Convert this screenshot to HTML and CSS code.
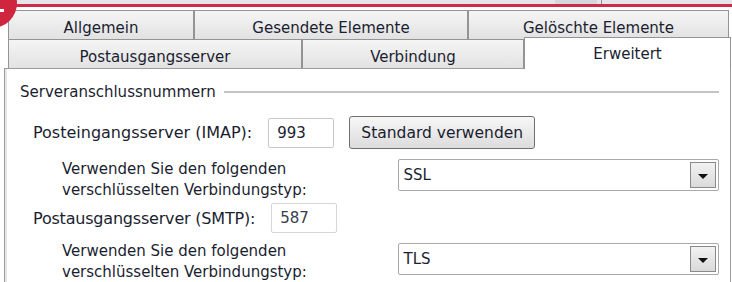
FILE: index.html
```html
<!DOCTYPE html>
<html>
<head>
  <meta charset="UTF-8">
  <title>Kontoeinstellungen - Erweitert</title>
  <link rel="stylesheet" href="styles.css">
</head>
<body>
  <!-- Rest of the window above, cut off by the screenshot -->
  <div class="topbar">
    <div class="topbar-field"></div>
    <div class="topbar-edge"></div>
  </div>
  <div class="redline"></div>
  <div class="badge"></div>

  <div class="tabs">
    <div class="tab-row">
      <div class="tab tab-general">Allgemein</div>
      <div class="tab tab-sent">Gesendete Elemente</div>
      <div class="tab tab-deleted">Gelöschte Elemente</div>
    </div>
    <div class="tab-row">
      <div class="tab tab-outgoing">Postausgangsserver</div>
      <div class="tab tab-connection">Verbindung</div>
      <div class="tab tab-advanced active">Erweitert</div>
    </div>
  </div>

  <div class="panel">
    <div class="group-head">
      <span class="group-title">Serveranschlussnummern</span>
      <span class="group-line"></span>
    </div>

    <div class="port-row first">
      <label class="port-label" for="imap-port">Posteingangsserver (IMAP):</label>
      <input class="port-input" id="imap-port" type="text" value="993">
      <button class="std-button">Standard verwenden</button>
    </div>

    <div class="type-row">
      <div class="type-label">Verwenden Sie den folgenden<br>verschlüsselten Verbindungstyp:</div>
      <div class="combo">
        <span class="combo-value">SSL</span>
        <span class="combo-btn"><span class="arrow"></span></span>
      </div>
    </div>

    <div class="port-row second">
      <label class="port-label" for="smtp-port">Postausgangsserver (SMTP):</label>
      <input class="port-input disabled" id="smtp-port" type="text" value="587" disabled>
    </div>

    <div class="type-row last">
      <div class="type-label">Verwenden Sie den folgenden<br>verschlüsselten Verbindungstyp:</div>
      <div class="combo">
        <span class="combo-value">TLS</span>
        <span class="combo-btn"><span class="arrow"></span></span>
      </div>
    </div>
  </div>
</body>
</html>
```

FILE: styles.css
```css
body {
  margin: 0;
  width: 732px;
  height: 282px;
  overflow: hidden;
  position: relative;
  background: #fff;
  font-family: "DejaVu Sans", Verdana, sans-serif;
  font-size: 15px;
  color: #1a1e30;
}

/* strip of the window above */
.topbar {
  display: flex;
  height: 4px;
  background: #e5e6eb;
}
.topbar-field {
  margin-left: 555px;
  width: 42px;
  background: #d3d7df;
}
.topbar-edge {
  margin-left: 4px;
  width: 1px;
  background: #8e8e8e;
}
.redline {
  height: 3px;
  background: #cf2b46;
}

/* red number marker in the corner */
.badge {
  position: absolute;
  left: -33px;
  top: -22px;
  width: 50px;
  height: 50px;
  border-radius: 50%;
  background: #d0253f;
}
.badge::after {
  content: "";
  position: absolute;
  left: 33px;
  top: 31px;
  width: 4px;
  height: 3px;
  background: #fff;
}

/* Tabs */
.tabs {
  margin-top: 3px;
  padding-left: 8px;
}
.tab-row {
  display: flex;
  align-items: flex-end;
  height: 29px;
}
.tab {
  box-sizing: border-box;
  height: 29px;
  border: 1px solid #949494;
  border-bottom: none;
  background: linear-gradient(#f5f5f5, #e2e2e2);
  display: flex;
  align-items: flex-start;
  justify-content: center;
  padding-top: 8px;
}
.tab-general { width: 186px; }
.tab-sent { width: 274px; }
.tab-deleted { width: 261px; }
.tab-outgoing { width: 294px; }
.tab-connection { width: 222px; }
.tab-advanced { width: 207px; }
.tab.active {
  height: 32px;
  margin-bottom: -1px;
  background: #fff;
  position: relative;
  z-index: 1;
  padding-top: 7px;
}

/* Panel */
.panel {
  box-sizing: border-box;
  margin-left: 4px;
  width: 727px;
  height: 214px;
  border: 1px solid #9c9c9c;
  border-bottom: none;
  box-shadow: inset 2px 0 0 #e6e6e6;
  padding: 13px 11px 0 15px;
}
.group-head {
  display: flex;
  align-items: center;
  height: 20px;
}
.group-line {
  flex: 1;
  height: 2px;
  margin-left: 8px;
  background: #c3c3c3;
}

.port-row {
  display: flex;
  align-items: center;
  height: 30px;
  margin-left: 13px;
}
.port-row.first {
  height: 35px;
  margin-top: 13px;
}
.port-row.second {
  margin-top: 2px;
}
.port-label {
  font-size: 16px;
  margin-right: 16px;
}
.port-row.second .port-label {
  letter-spacing: -0.2px;
}
.port-input {
  box-sizing: border-box;
  width: 66px;
  height: 30px;
  border: 1px solid #c9c9c9;
  border-radius: 2px;
  padding: 0 0 0 8px;
  font: inherit;
  color: #1a1e30;
  background: #fff;
}
.port-input.disabled {
  color: #3a3d4a;
  border-color: #d6d6d6;
}
.std-button {
  box-sizing: border-box;
  margin-left: 15px;
  width: 186px;
  height: 33px;
  border: 1px solid #6f6f6f;
  border-radius: 3px;
  background: linear-gradient(#f7f7f7, #dcdcdc);
  font: inherit;
  font-size: 15.5px;
  color: #1a1e30;
  padding: 0;
}

.type-row {
  display: flex;
  align-items: flex-start;
  margin-left: 42px;
  margin-top: 9px;
}
.type-row.last {
  margin-top: 8px;
}
.type-row.last .combo {
  margin-top: 2px;
}
.type-label {
  width: 337px;
  line-height: 21px;
}
.combo {
  box-sizing: border-box;
  width: 321px;
  height: 32px;
  border: 1px solid #a9a9a9;
  border-radius: 2px;
  display: flex;
  align-items: center;
  justify-content: space-between;
  padding: 0 2px 0 4px;
}
.combo-btn {
  box-sizing: border-box;
  width: 26px;
  height: 26px;
  border: 1px solid #8a8a8a;
  background: linear-gradient(#f2f2f2, #dadada);
  display: flex;
  align-items: center;
  justify-content: center;
}
.arrow {
  width: 0;
  height: 0;
  border-left: 5px solid transparent;
  border-right: 5px solid transparent;
  border-top: 5px solid #111;
  margin-top: 2px;
}
```
